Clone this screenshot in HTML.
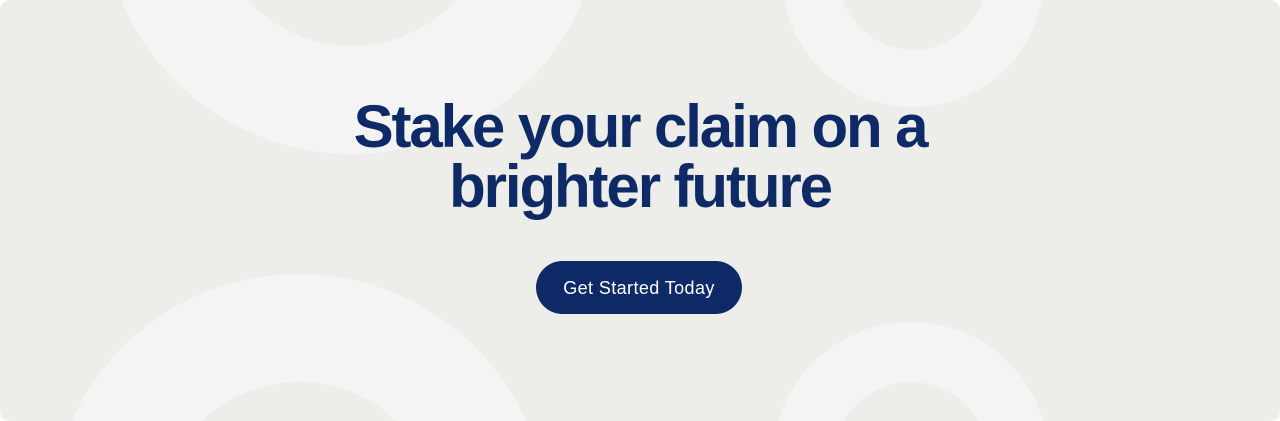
<!DOCTYPE html>
<html><head><style>
html,body{margin:0;padding:0;background:#fff;width:1280px;height:421px;overflow:hidden;}
.wrap{position:relative;width:1280px;height:421px;overflow:hidden;background:#EDEEE9;border-radius:10px;}
.ring{position:absolute;border-radius:50%;box-sizing:border-box;border-style:solid;border-color:#F4F4F4;}
h1{position:absolute;left:0;top:97px;width:1280px;margin:0;text-align:center;font-family:"Liberation Sans",sans-serif;font-weight:700;font-size:60px;line-height:60px;letter-spacing:-2.1px;color:#0E2A66;}
.btn{position:absolute;left:536px;top:261px;width:206px;height:53px;border-radius:27px;background:#0E2A66;color:#fff;font-family:"Liberation Sans",sans-serif;font-size:18px;letter-spacing:0.4px;line-height:55px;text-align:center;}
</style></head><body>
<div class="wrap">
<div class="ring" style="left:102px;top:-346px;width:500px;height:500px;border-width:108px;"></div>
<div class="ring" style="left:782px;top:-155px;width:262px;height:262px;border-width:57px;"></div>
<div class="ring" style="left:50px;top:274px;width:498px;height:498px;border-width:108px;"></div>
<div class="ring" style="left:773px;top:322px;width:276px;height:276px;border-width:60px;"></div>
<h1>Stake your claim on a<br>brighter future</h1>
<div class="btn">Get Started Today</div>
</div>
</body></html>
